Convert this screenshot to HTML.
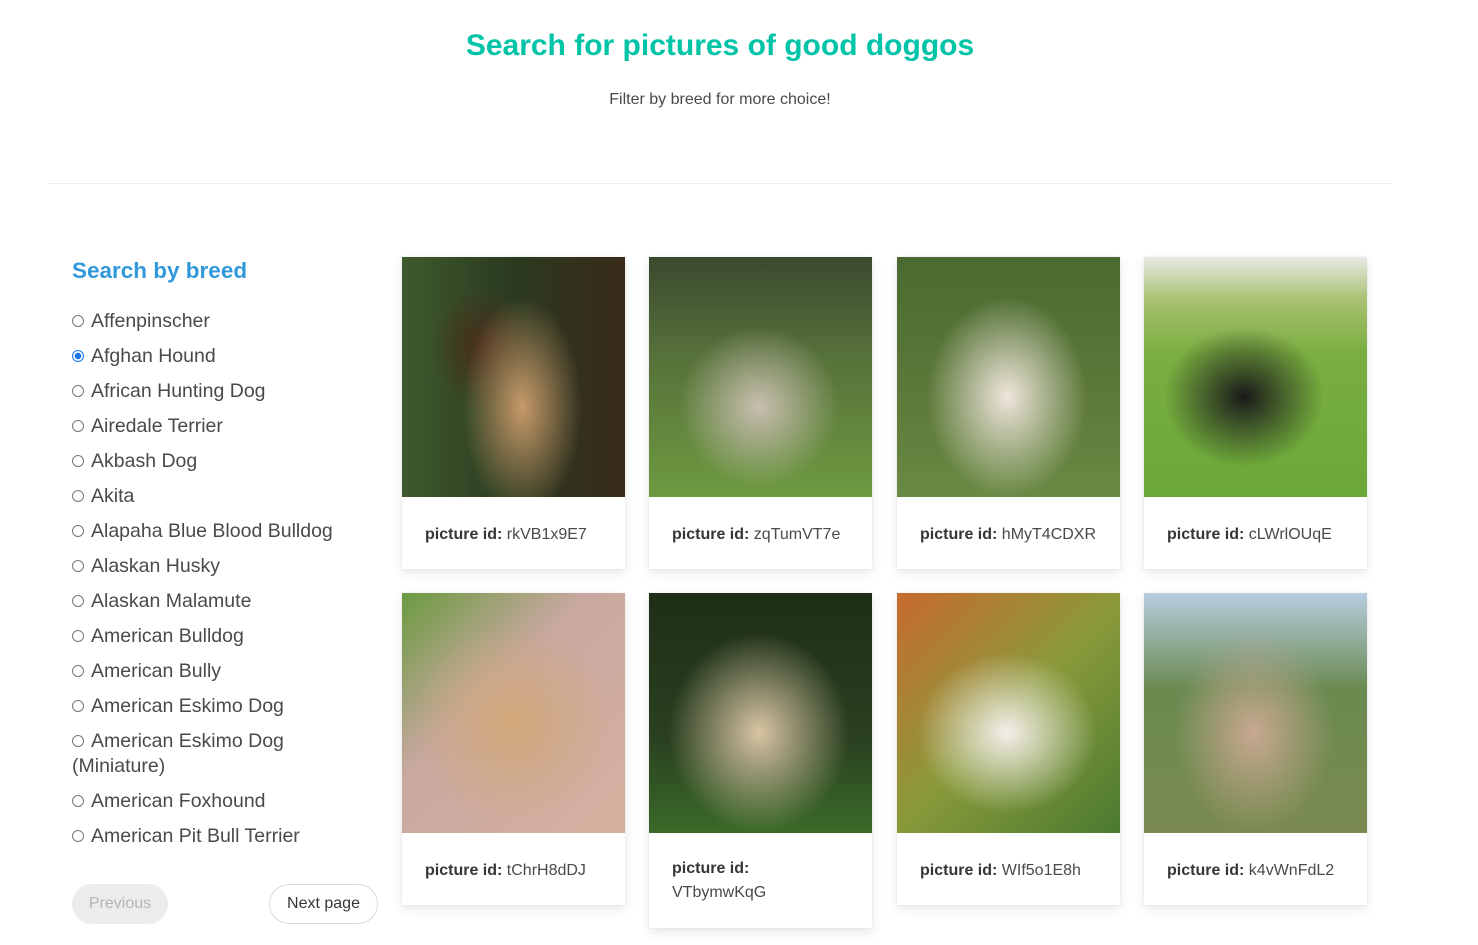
<!DOCTYPE html>
<html><head><meta charset="utf-8"><style>
*{box-sizing:border-box;margin:0;padding:0}
body{width:1478px;height:945px;overflow:hidden;background:#fff;font-family:"Liberation Sans",sans-serif;color:#4a4a4a;position:relative}
h1{position:absolute;top:29px;left:0;width:1440px;text-align:center;color:#00c4a7;font-size:30px;font-weight:600}
.sub{position:absolute;top:91px;left:0;width:1440px;text-align:center;font-size:16px}
hr{position:absolute;top:183px;left:48px;width:1344px;border:0;border-top:1px solid #ededed}
h2{position:absolute;top:258px;left:72px;color:#3298dc;font-size:22.5px;font-weight:600}
.list{position:absolute;top:309px;left:72px;width:290px;font-size:19.5px;line-height:25px}
.list div{margin-bottom:10px}
.r{display:inline-block;width:12px;height:12px;border:1px solid #777;border-radius:50%;margin-right:7px;vertical-align:0px}
.r.on{border-color:#1a73e8;background:radial-gradient(circle,#1a73e8 3px,#fff 3.5px)}
.btn{position:absolute;top:884px;height:40px;border-radius:20px;font-size:16px;line-height:40px;text-align:center}
.card{position:absolute;width:223px;background:#fff;box-shadow:0 4px 10px rgba(10,10,10,.1),0 0 0 1px rgba(10,10,10,.02)}
.img{height:240px}
.cap{padding:22px 23px 0;font-size:16px;line-height:32px;height:72px}
.cap b{color:#363636}
</style></head><body>
<h1>Search for pictures of good doggos</h1>
<div class="sub">Filter by breed for more choice!</div>
<hr>
<h2>Search by breed</h2>
<div class="list">
<div><span class="r"></span>Affenpinscher</div>
<div><span class="r on"></span>Afghan Hound</div>
<div><span class="r"></span>African Hunting Dog</div>
<div><span class="r"></span>Airedale Terrier</div>
<div><span class="r"></span>Akbash Dog</div>
<div><span class="r"></span>Akita</div>
<div><span class="r"></span>Alapaha Blue Blood Bulldog</div>
<div><span class="r"></span>Alaskan Husky</div>
<div><span class="r"></span>Alaskan Malamute</div>
<div><span class="r"></span>American Bulldog</div>
<div><span class="r"></span>American Bully</div>
<div><span class="r"></span>American Eskimo Dog</div>
<div><span class="r"></span>American Eskimo Dog (Miniature)</div>
<div><span class="r"></span>American Foxhound</div>
<div><span class="r"></span>American Pit Bull Terrier</div>
</div>
<div class="btn" style="left:72px;width:96px;background:#ececec;color:#b5b5b5">Previous</div>
<div class="btn" style="left:269px;width:109px;border:1px solid #dbdbdb;color:#363636;line-height:38px">Next page</div>

<div class="card" style="left:402px;top:257px"><div class="img" style="background:radial-gradient(ellipse 60px 110px at 120px 150px,#c89a6a,transparent),radial-gradient(ellipse 50px 60px at 80px 90px,#4a2e1c,transparent),linear-gradient(90deg,#3f5a2c,#2a3a20 50%,#3a2a1c)"></div><div class="cap"><b>picture id:</b> rkVB1x9E7</div></div>
<div class="card" style="left:649px;top:257px"><div class="img" style="background:radial-gradient(ellipse 80px 80px at 110px 150px,#c9bfb0,transparent),linear-gradient(180deg,#3a4a2e,#56703a 40%,#6e9a40)"></div><div class="cap"><b>picture id:</b> zqTumVT7e</div></div>
<div class="card" style="left:897px;top:257px"><div class="img" style="background:radial-gradient(ellipse 80px 100px at 110px 140px,#efe6dc,transparent),linear-gradient(180deg,#4a6a30,#5e7a3a 60%,#6a8a44)"></div><div class="cap"><b>picture id:</b> hMyT4CDXR</div></div>
<div class="card" style="left:1144px;top:257px"><div class="img" style="background:radial-gradient(ellipse 80px 70px at 100px 140px,#1a1a1a,transparent),linear-gradient(180deg,#e8ebe6,#a8c070 18%,#7aae40 40%,#6aa838)"></div><div class="cap"><b>picture id:</b> cLWrlOUqE</div></div>

<div class="card" style="left:402px;top:593px"><div class="img" style="background:radial-gradient(ellipse 100px 100px at 110px 130px,#d0a878,transparent),linear-gradient(135deg,#6a9a40,#c8a8a0 40%,#d8b0a0)"></div><div class="cap"><b>picture id:</b> tChrH8dDJ</div></div>
<div class="card" style="left:649px;top:593px;height:335px"><div class="img" style="background:radial-gradient(ellipse 90px 100px at 110px 140px,#d8c4a4,transparent),linear-gradient(180deg,#1e2e18,#2a4020 60%,#3a6a28)"></div><div class="cap" style="padding-top:24px;line-height:24px"><b>picture id:</b><br>VTbymwKqG</div></div>
<div class="card" style="left:897px;top:593px"><div class="img" style="background:radial-gradient(ellipse 90px 80px at 110px 140px,#f4efea,transparent),linear-gradient(135deg,#c86a30,#8a9a3a 50%,#4a7a30)"></div><div class="cap"><b>picture id:</b> WIf5o1E8h</div></div>
<div class="card" style="left:1144px;top:593px"><div class="img" style="background:radial-gradient(ellipse 80px 100px at 110px 140px,#c8a890,transparent),linear-gradient(180deg,#b8cce0,#6a8a50 40%,#7a8a50)"></div><div class="cap"><b>picture id:</b> k4vWnFdL2</div></div>
</body></html>
